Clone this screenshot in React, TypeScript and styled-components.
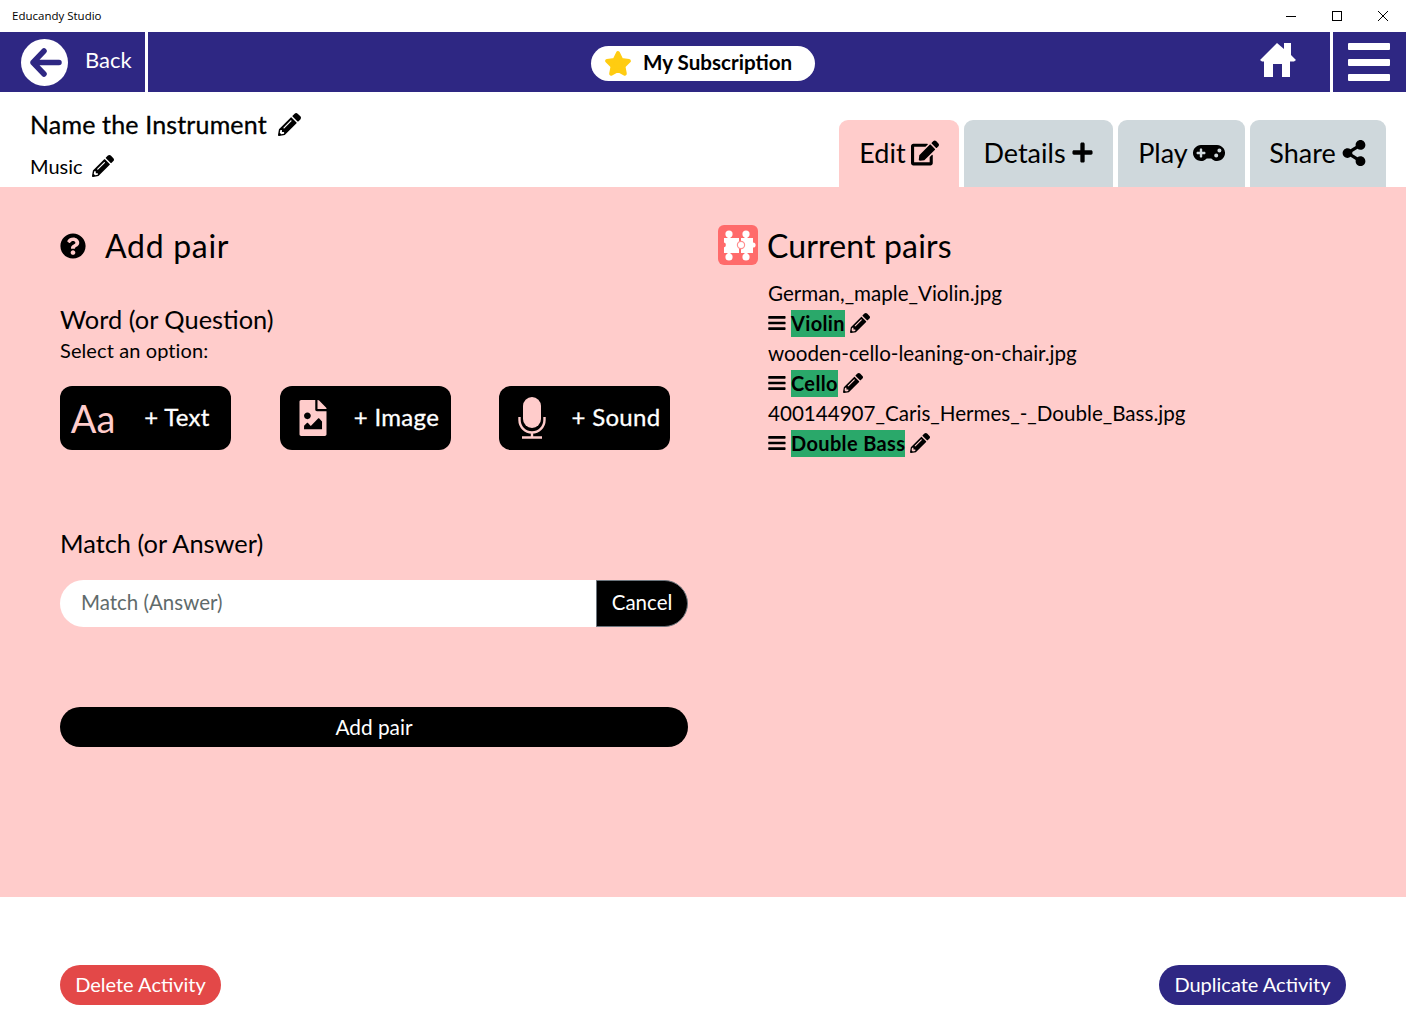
import React from 'react';
import styled, { createGlobalStyle } from 'styled-components';
import {
  FaPencilAlt,
  FaEdit,
  FaPlus,
  FaGamepad,
  FaShareAlt,
  FaBars,
  FaQuestionCircle,
  FaFileImage,
} from 'react-icons/fa';

const NAVY = '#2e2783';
const PINK = '#ffcccb';
const FONT = '"Lato", "Open Sans", sans-serif';

const GlobalStyle = createGlobalStyle`
  html, body { margin: 0; padding: 0; background: #fff; }
  body { font-family: ${FONT}; color: #000; }
  * { box-sizing: border-box; }
`;

const Page = styled.div`
  width: 1406px;
  height: 1020px;
  display: flex;
  flex-direction: column;
  overflow: hidden;
`;

const TitleBar = styled.div`
  height: 32px;
  display: flex;
  align-items: center;
  justify-content: space-between;
  padding-left: 12px;
  font: 11.5px 'Open Sans', sans-serif;
`;

const AppName = styled.span`
  margin-bottom: 2px;
`;

const WindowButtons = styled.div`
  display: flex;
  align-items: center;
`;

const WindowButton = styled.div`
  width: 46px;
  height: 32px;
  display: flex;
  align-items: center;
  justify-content: center;
`;

const NavBar = styled.div`
  height: 60px;
  background: ${NAVY};
  display: flex;
  align-items: stretch;
  color: #fff;
`;

const BackCell = styled.div`
  width: 148px;
  border-right: 3px solid #fff;
  display: flex;
  align-items: center;
  padding-left: 21px;
  gap: 17px;
  font-size: 22px;
`;

const BackLabel = styled.span`
  margin-bottom: 6px;
`;

const NavMiddle = styled.div`
  flex: 1;
  display: flex;
  align-items: center;
  padding: 0 34px 0 443px;
`;

const HomeLink = styled.div`
  margin: 0 0 2px auto;
  display: flex;
`;

const SubscriptionPill = styled.div`
  width: 224px;
  height: 35px;
  margin-top: 2px;
  border-radius: 18px;
  background: #fff;
  color: #000;
  display: flex;
  align-items: center;
  padding-left: 13px;
  gap: 11px;
  font-size: 20.6px;
  font-weight: 700;
`;

const PillLabel = styled.span`
  margin-bottom: 3px;
`;

const MenuCell = styled.div`
  width: 76px;
  border-left: 3px solid #fff;
  display: flex;
  align-items: center;
  justify-content: center;
  padding-right: 2px;
`;

const MenuBars = styled.div`
  width: 42px;
  height: 38px;
  display: flex;
  flex-direction: column;
  justify-content: space-between;
  span {
    height: 7px;
    background: #fff;
    border-radius: 1px;
  }
`;

const Head = styled.div`
  height: 95px;
  display: flex;
  justify-content: space-between;
  align-items: flex-end;
  padding: 0 20px 0 30px;
`;

const HeadText = styled.div`
  align-self: stretch;
  display: flex;
  flex-direction: column;
`;

const ActivityTitle = styled.div`
  margin-top: 17px;
  display: flex;
  align-items: center;
  gap: 11px;
  font-size: 25px;
  letter-spacing: 0.15px;
  -webkit-text-stroke: 0.3px #000;
  height: 30px;
`;

const ActivitySubject = styled.div`
  margin-top: 14px;
  display: flex;
  align-items: center;
  gap: 9px;
  font-size: 20px;
  height: 26px;
`;

const Tabs = styled.div`
  display: flex;
  gap: 5px;
`;

const Tab = styled.div<{ $active?: boolean; $width: number }>`
  width: ${(p) => p.$width}px;
  height: 67px;
  border-radius: 9px 9px 0 0;
  background: ${(p) => (p.$active ? PINK : '#cfd8dc')};
  display: flex;
  align-items: center;
  justify-content: center;
  padding-bottom: 2px;
  gap: 5px;
  font-size: 27px;
`;

const Main = styled.div`
  height: 710px;
  background: ${PINK};
  display: grid;
  grid-template-columns: 628px 1fr;
  column-gap: 30px;
  padding: 36px 60px 0;
`;

const Column = styled.div`
  display: flex;
  flex-direction: column;
`;

const SectionTitle = styled.div`
  height: 44px;
  display: flex;
  align-items: center;
  font-size: 32px;
  letter-spacing: 0.7px;
`;

const HelpIcon = styled.span`
  display: flex;
  font-size: 26px;
  margin: 2px 19px 0 0;
`;

const FieldTitle = styled.div<{ $top: number }>`
  margin-top: ${(p) => p.$top}px;
  font-size: 25.4px;
  height: 32px;
  line-height: 32px;
`;

const Hint = styled.div`
  font-size: 20px;
  letter-spacing: 0.1px;
  line-height: 24px;
  margin-top: 3px;
`;

const Options = styled.div`
  margin-top: 23.5px;
  display: flex;
  gap: 48.5px;
`;

const OptionButton = styled.div`
  width: 171px;
  height: 64px;
  border-radius: 12px;
  background: #000;
  color: #fff;
  display: grid;
  grid-template-columns: 66px 1fr;
  align-items: center;
  font-size: 24px;
  letter-spacing: 0.3px;
  -webkit-text-stroke: 0.3px #fff;
`;

const OptionIcon = styled.span`
  color: ${PINK};
  display: flex;
  justify-content: center;
  font-size: 36px;
  line-height: 1;
  letter-spacing: 0;
  -webkit-text-stroke: 0;
`;

const AaGlyph = styled.span`
  font-size: 38px;
`;

const OptionLabel = styled.span`
  justify-self: center;
  padding: 0 3px 3px 0;
  white-space: nowrap;
`;

const InputRow = styled.div`
  margin-top: 21px;
  height: 47px;
  display: flex;
`;

const AnswerInput = styled.input`
  flex: 1;
  min-width: 0;
  border: 0;
  outline: 0;
  background: #fff;
  border-radius: 24px 0 0 24px;
  padding: 0 21px 3px;
  font: 20.5px ${FONT};
  &::placeholder { color: #5f6b6b; opacity: 1; }
`;

const CancelButton = styled.div`
  width: 92px;
  background: #000;
  color: #fff;
  border: 1px solid #6c757d;
  border-radius: 0 24px 24px 0;
  display: flex;
  align-items: center;
  justify-content: center;
  padding-bottom: 3px;
  font-size: 20.5px;
`;

const AddButton = styled.div`
  margin-top: 80px;
  height: 40px;
  border-radius: 20px;
  background: #000;
  color: #fff;
  display: flex;
  align-items: center;
  justify-content: center;
  padding-bottom: 2px;
  font-size: 20.8px;
`;

const CurrentHead = styled.div`
  display: flex;
  align-items: center;
  gap: 9px;
  font-size: 32px;
  letter-spacing: 0.15px;
  height: 44px;
`;

const PairList = styled.div`
  margin: 11px 0 0 50px;
  display: flex;
  flex-direction: column;
  font-size: 20.6px;
`;

const FileName = styled.div`
  height: 30px;
  line-height: 30px;
`;

const PairRow = styled.div`
  height: 30px;
  display: flex;
  align-items: center;
`;

const DragHandle = styled.span`
  display: flex;
  width: 23px;
  font-size: 18px;
  margin-left: -1px;
  padding-right: 1px;
  transform: scaleX(1.1);
  transform-origin: left;
`;

const Match = styled.span`
  height: 27px;
  line-height: 26px;
  background: #2aa86a;
  font-size: 20px;
  font-weight: 700;
  letter-spacing: 0.35px;
  margin: 0 5px 0 1px;
`;

const Footer = styled.div`
  flex: 1;
  display: flex;
  justify-content: space-between;
  padding: 68px 60px 0;
`;

const FooterButton = styled.div<{ $color: string; $width: number }>`
  width: ${(p) => p.$width}px;
  height: 40px;
  border-radius: 20px;
  background: ${(p) => p.$color};
  color: #fff;
  display: flex;
  align-items: center;
  justify-content: center;
  padding-bottom: 2px;
  font-size: 20px;
`;

const BackIcon = () => (
  <svg width="47" height="47" viewBox="0 0 47 47">
    <circle cx="23.5" cy="23.5" r="23.5" fill="#fff" />
    <path
      d="M23 12 L12 23.5 L23 35 M12 23.5 H38"
      fill="none"
      stroke={NAVY}
      strokeWidth="5.5"
      strokeLinecap="round"
      strokeLinejoin="round"
    />
  </svg>
);

const StarIcon = () => (
  <svg width="28" height="27" viewBox="0 0 28 27">
    <path
      d="M14 3 L17.3 9.9 L24.9 10.9 L19.4 16.2 L20.8 23.7 L14 20.1 L7.2 23.7 L8.6 16.2 L3.1 10.9 L10.7 9.9 Z"
      fill="#ffcc11"
      stroke="#ffcc11"
      strokeWidth="4"
      strokeLinejoin="round"
    />
  </svg>
);

const HomeIcon = () => (
  <svg width="36" height="36" viewBox="0 0 36 36">
    <path
      d="M17 0 L24 6 V0 H31 V12 L36 17 L34 18.5 H30 V34 H22 V21 H13 V34 H4 V18.5 H2 L0 17 Z"
      fill="#fff"
    />
  </svg>
);

const MicIcon = () => (
  <svg width="30" height="44" viewBox="0 0 30 44">
    <rect x="6" y="1" width="18" height="31" rx="9" fill={PINK} />
    <path
      d="M2.5 21 V24 A12.5 12.5 0 0 0 27.5 24 V21 M15 36 V41.5 M5 41.5 H25"
      fill="none"
      stroke={PINK}
      strokeWidth="2.4"
    />
  </svg>
);

const PuzzleIcon = () => (
  <svg width="40" height="40" viewBox="0 0 40 40">
    <rect width="40" height="40" rx="6" fill="#ff6b6b" />
    <g fill="#fff">
      <rect x="6" y="13" width="15" height="15" />
      <rect x="23" y="13" width="12" height="15" />
      <rect x="9.5" y="9" width="3" height="23" />
      <rect x="26.5" y="9" width="3" height="23" />
      <circle cx="11" cy="9" r="3.6" />
      <circle cx="28" cy="9" r="3.6" />
      <circle cx="11" cy="32" r="3.6" />
      <circle cx="28" cy="32" r="3.6" />
      <circle cx="35" cy="20" r="2.6" />
      <circle cx="23" cy="20" r="3.6" stroke="#ff8f8f" strokeWidth="1.2" />
    </g>
    <circle cx="5.5" cy="20" r="2.4" fill="#ff6b6b" />
  </svg>
);

const pairs = [
  { file: 'German,_maple_Violin.jpg', match: 'Violin' },
  { file: 'wooden-cello-leaning-on-chair.jpg', match: 'Cello' },
  { file: '400144907_Caris_Hermes_-_Double_Bass.jpg', match: 'Double Bass' },
];

const App = () => (
  <Page>
    <GlobalStyle />
    <TitleBar>
      <AppName>Educandy Studio</AppName>
      <WindowButtons>
        <WindowButton>
          <svg width="10" height="10" viewBox="0 0 10 10">
            <path d="M0 5.5 H10" stroke="#000" />
          </svg>
        </WindowButton>
        <WindowButton>
          <svg width="10" height="10" viewBox="0 0 10 10">
            <rect x="0.5" y="0.5" width="9" height="9" fill="none" stroke="#000" />
          </svg>
        </WindowButton>
        <WindowButton>
          <svg width="10" height="10" viewBox="0 0 10 10">
            <path d="M0 0 L10 10 M10 0 L0 10" stroke="#000" />
          </svg>
        </WindowButton>
      </WindowButtons>
    </TitleBar>

    <NavBar>
      <BackCell>
        <BackIcon />
        <BackLabel>Back</BackLabel>
      </BackCell>
      <NavMiddle>
        <SubscriptionPill>
          <StarIcon />
          <PillLabel>My Subscription</PillLabel>
        </SubscriptionPill>
        <HomeLink>
          <HomeIcon />
        </HomeLink>
      </NavMiddle>
      <MenuCell>
        <MenuBars>
          <span />
          <span />
          <span />
        </MenuBars>
      </MenuCell>
    </NavBar>

    <Head>
      <HeadText>
        <ActivityTitle>
          Name the Instrument <FaPencilAlt size={23} />
        </ActivityTitle>
        <ActivitySubject>
          Music <FaPencilAlt size={22} />
        </ActivitySubject>
      </HeadText>
      <Tabs>
        <Tab $active $width={120}>
          Edit <FaEdit size={28} />
        </Tab>
        <Tab $width={149}>
          Details <FaPlus size={23} />
        </Tab>
        <Tab $width={127}>
          Play <FaGamepad size={32} />
        </Tab>
        <Tab $width={136}>
          Share <FaShareAlt size={26} />
        </Tab>
      </Tabs>
    </Head>

    <Main>
      <Column>
        <SectionTitle>
          <HelpIcon>
            <FaQuestionCircle />
          </HelpIcon>
          Add pair
        </SectionTitle>
        <FieldTitle $top={36}>Word (or Question)</FieldTitle>
        <Hint>Select an option:</Hint>
        <Options>
          <OptionButton>
            <OptionIcon>
              <AaGlyph>Aa</AaGlyph>
            </OptionIcon>
            <OptionLabel>+ Text</OptionLabel>
          </OptionButton>
          <OptionButton>
            <OptionIcon>
              <FaFileImage />
            </OptionIcon>
            <OptionLabel>+ Image</OptionLabel>
          </OptionButton>
          <OptionButton>
            <OptionIcon>
              <MicIcon />
            </OptionIcon>
            <OptionLabel>+ Sound</OptionLabel>
          </OptionButton>
        </Options>
        <FieldTitle $top={77.5}>Match (or Answer)</FieldTitle>
        <InputRow>
          <AnswerInput placeholder="Match (Answer)" />
          <CancelButton>Cancel</CancelButton>
        </InputRow>
        <AddButton>Add pair</AddButton>
      </Column>
      <Column>
        <CurrentHead>
          <PuzzleIcon />
          Current pairs
        </CurrentHead>
        <PairList>
          {pairs.map((pair) => (
            <React.Fragment key={pair.file}>
              <FileName>{pair.file}</FileName>
              <PairRow>
                <DragHandle>
                  <FaBars />
                </DragHandle>
                <Match>{pair.match}</Match>
                <FaPencilAlt size={20} />
              </PairRow>
            </React.Fragment>
          ))}
        </PairList>
      </Column>
    </Main>

    <Footer>
      <FooterButton $color="#e34848" $width={161}>
        Delete Activity
      </FooterButton>
      <FooterButton $color={NAVY} $width={187}>
        Duplicate Activity
      </FooterButton>
    </Footer>
  </Page>
);

export default App;
